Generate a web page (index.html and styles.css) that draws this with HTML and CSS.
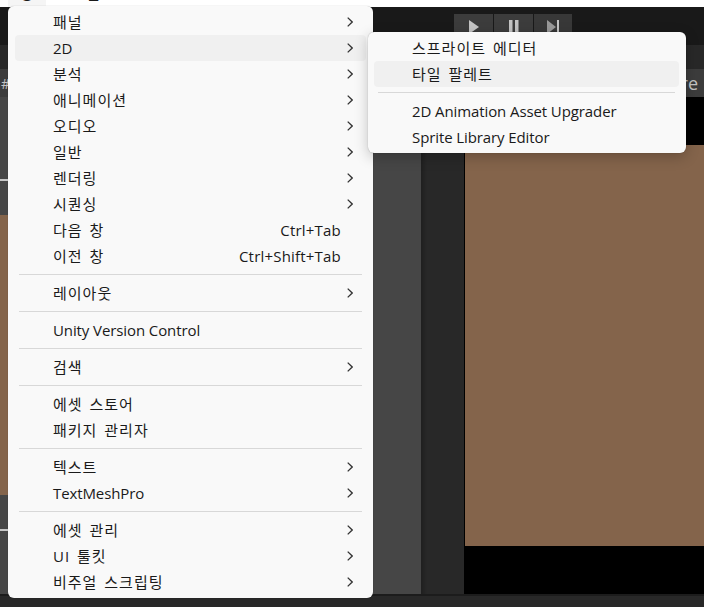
FILE: index.html
```html
<!DOCTYPE html>
<html lang="ko">
<head>
<meta charset="utf-8">
<title>Window menu</title>
<link rel="stylesheet" href="styles.css">
</head>
<body>
<div class="app">
  <div class="menubar">
    <div class="menubar-tab"><span class="menubar-text">창</span></div>
    <span class="menubar-text menubar-help">도움</span>
  </div>
  <div class="toolbar">
    <div class="play-group">
      <div class="play-btn"><svg width="10" height="14" viewBox="0 0 10 14"><path d="M0 0L10 7L0 14Z" fill="#c4c4c4"/></svg></div>
      <div class="play-btn"><svg width="10" height="14" viewBox="0 0 10 14"><path d="M0 0H3.5V14H0ZM6 0H9.500V14H6Z" fill="#c4c4c4"/></svg></div>
      <div class="play-btn play-btn-step"><svg width="12" height="14" viewBox="0 0 12 14"><path d="M0 0L9 7L0 14Z" fill="#999"/><path d="M10 0H12V14H10Z" fill="#c4c4c4"/></svg></div>
    </div>
  </div>
  <div class="strip"></div>
  <div class="tabrow">
    <span class="hash">#</span>
    <span class="tab-end">re</span>
  </div>
  <div class="workspace">
    <div class="left-panel">
      <div class="panel-line panel-a"></div>
      <div class="panel-brown"></div>
      <div class="panel-line panel-b"></div>
    </div>
    <div class="gutter"></div>
    <div class="viewport"><div class="viewport-brown"></div></div>
  </div>
  <div class="statusbar"></div>

  <div class="menu menu-main">
    <div class="item"><span>패널</span><svg class="chev" viewBox="0 0 6 10"><path d="M.7.6L5.200 5L.7 9.400"/></svg></div>
    <div class="item hover"><span class="latin">2D</span><svg class="chev" viewBox="0 0 6 10"><path d="M.7.6L5.200 5L.7 9.400"/></svg></div>
    <div class="item"><span>분석</span><svg class="chev" viewBox="0 0 6 10"><path d="M.7.6L5.200 5L.7 9.400"/></svg></div>
    <div class="item"><span>애니메이션</span><svg class="chev" viewBox="0 0 6 10"><path d="M.7.6L5.200 5L.7 9.400"/></svg></div>
    <div class="item"><span>오디오</span><svg class="chev" viewBox="0 0 6 10"><path d="M.7.6L5.200 5L.7 9.400"/></svg></div>
    <div class="item"><span>일반</span><svg class="chev" viewBox="0 0 6 10"><path d="M.7.6L5.200 5L.7 9.400"/></svg></div>
    <div class="item"><span>렌더링</span><svg class="chev" viewBox="0 0 6 10"><path d="M.7.6L5.200 5L.7 9.400"/></svg></div>
    <div class="item"><span>시퀀싱</span><svg class="chev" viewBox="0 0 6 10"><path d="M.7.6L5.200 5L.7 9.400"/></svg></div>
    <div class="item"><span>다음 창</span><span class="key">Ctrl+Tab</span></div>
    <div class="item"><span>이전 창</span><span class="key">Ctrl+Shift+Tab</span></div>
    <div class="sep"></div>
    <div class="item"><span>레이아웃</span><svg class="chev" viewBox="0 0 6 10"><path d="M.7.6L5.200 5L.7 9.400"/></svg></div>
    <div class="sep"></div>
    <div class="item"><span class="latin">Unity Version Control</span></div>
    <div class="sep"></div>
    <div class="item"><span>검색</span><svg class="chev" viewBox="0 0 6 10"><path d="M.7.6L5.200 5L.7 9.400"/></svg></div>
    <div class="sep"></div>
    <div class="item"><span>에셋 스토어</span></div>
    <div class="item"><span>패키지 관리자</span></div>
    <div class="sep"></div>
    <div class="item"><span>텍스트</span><svg class="chev" viewBox="0 0 6 10"><path d="M.7.6L5.200 5L.7 9.400"/></svg></div>
    <div class="item"><span class="latin">TextMeshPro</span><svg class="chev" viewBox="0 0 6 10"><path d="M.7.6L5.200 5L.7 9.400"/></svg></div>
    <div class="sep"></div>
    <div class="item"><span>에셋 관리</span><svg class="chev" viewBox="0 0 6 10"><path d="M.7.6L5.200 5L.7 9.400"/></svg></div>
    <div class="item"><span>UI 툴킷</span><svg class="chev" viewBox="0 0 6 10"><path d="M.7.6L5.200 5L.7 9.400"/></svg></div>
    <div class="item"><span>비주얼 스크립팅</span><svg class="chev" viewBox="0 0 6 10"><path d="M.7.6L5.200 5L.7 9.400"/></svg></div>
  </div>

  <div class="menu menu-sub">
    <div class="item"><span>스프라이트 에디터</span></div>
    <div class="item hover"><span>타일 팔레트</span></div>
    <div class="sep"></div>
    <div class="item"><span class="latin">2D Animation Asset Upgrader</span></div>
    <div class="item"><span class="latin">Sprite Library Editor</span></div>
  </div>
</div>
</body>
</html>
```
FILE: styles.css
```css
* { box-sizing: border-box; }
html, body { margin: 0; padding: 0; background: #282828; }
.app {
  position: relative;
  width: 704px;
  height: 607px;
  overflow: hidden;
  display: flex;
  flex-direction: column;
  font-family: "Open Sans", "Noto Sans CJK KR", sans-serif;
  font-size: 15px;
  color: #1a1a1a;
}
.menubar {
  height: 7px;
  flex: none;
  background: #fff;
  display: flex;
  overflow: hidden;
  padding-left: 8px;
  align-items: flex-start;
}
.menubar-tab {
  width: 38px;
  height: 7px;
  background: #f5f5f5;
  display: flex;
  justify-content: center;
}
.menubar-text {
  display: block;
  height: 18px;
  line-height: 18px;
  margin-top: -16px;
}
.menubar-help { margin-left: 26px; letter-spacing: 1px; }
.toolbar {
  height: 38px;
  flex: none;
  background: #191919;
  padding: 7px 0 0 454px;
}
.play-group { display: flex; gap: 1px; height: 31px; }
.play-btn {
  width: 39px;
  background: #3c3c3c;
  display: flex;
  align-items: flex-start;
  justify-content: center;
  padding-top: 6px;
}
.play-btn-step { width: 38px; background: #383838; }
.strip { height: 24px; flex: none; background: #282828; }
.tabrow {
  height: 28px;
  flex: none;
  background: #3c3c3c;
  display: flex;
  justify-content: space-between;
  align-items: center;
  color: #c4c4c4;
  font-size: 18px;
}
.hash { margin-left: 1px; font-size: 14px; }
.tab-end { margin-right: 6px; }
.workspace { height: 497px; flex: none; display: flex; }
.left-panel {
  width: 421px;
  flex: none;
  background: #464646;
  display: flex;
  flex-direction: column;
}
.panel-line { height: 2px; width: 300px; background: #c8c8c8; flex: none; }
.panel-a { margin-top: 82px; margin-bottom: 34px; }
.panel-brown { height: 280px; width: 300px; flex: none; background: #84644b; }
.panel-b { margin-top: 34px; }
.gutter {
  width: 44px;
  flex: none;
  background: linear-gradient(90deg, #1f1f1f 0, #282828 6px);
  border-right: 1px solid #000;
}
.viewport { flex: 1; background: #000; padding: 48px 0; }
.viewport-brown { height: 401px; background: #84644b; }
.statusbar {
  height: 13px;
  flex: none;
  background: #282828;
  border-top: 2px solid #1c1c1c;
}
.menu {
  position: absolute;
  background: #f9f9f9;
  border-radius: 6px;
  padding: 3px 7px;
  box-shadow: 0 0 1px rgba(0, 0, 0, .35);
}
.menu-main { left: 8px; top: 6px; width: 365px; height: 592px; }
.menu-sub {
  left: 368px;
  top: 32px;
  width: 318px;
  height: 121px;
  padding: 3px 7px 3px 6px;
  box-shadow: 0 0 1px rgba(0, 0, 0, .35), 0 4px 14px rgba(0, 0, 0, .22);
}
.item {
  height: 26px;
  display: flex;
  align-items: center;
  justify-content: space-between;
  padding-left: 38px;
  padding-right: 25px;
  border-radius: 4px;
  white-space: nowrap;
  letter-spacing: 1px;
  word-spacing: 2px;
}
.item > span { position: relative; top: -1px; }
.item > .latin, .item > .key { top: 0; letter-spacing: -.1px; word-spacing: 0; }
.item > .key { letter-spacing: .2px; }
.menu-main .item { padding-right: 13px; }
.menu-main .item:has(.key) { padding-right: 25px; }
.hover { background: #f0f0f0; }
.sep { height: 11px; display: flex; align-items: center; padding: 0 4px; }
.sep::before { content: ""; display: block; width: 100%; height: 1px; background: #d8d8d8; }
.chev { width: 6px; height: 10px; fill: none; stroke: #333; stroke-width: 1.300; }
```
